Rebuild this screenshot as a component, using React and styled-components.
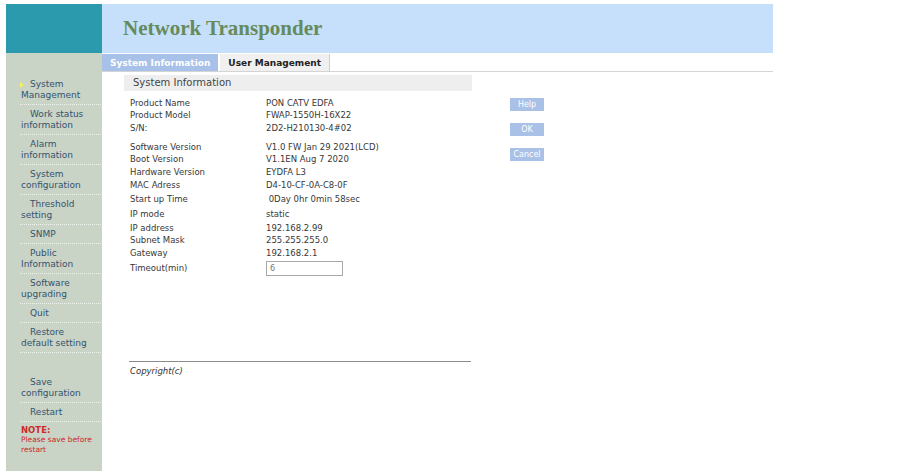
import React from 'react';
import styled, { createGlobalStyle } from 'styled-components';

const GlobalStyle = createGlobalStyle`
    body {
        margin: 0;
        background: #ffffff;
        font-family: "DejaVu Sans", Verdana, sans-serif;
    }
`;

const Page = styled.div`
    display: grid;
    grid-template-columns: 96px 671px;
    grid-template-rows: 49px 418px;
    padding: 4px 0 0 6px;
`;

const Logo = styled.div`
    background: #2b9aad;
`;

const Banner = styled.div`
    background: #c6dffa;
    display: flex;
    align-items: center;
    padding-left: 21px;
`;

const Title = styled.h1`
    margin: 0;
    font-family: "Liberation Serif", "Times New Roman", serif;
    font-size: 21px;
    font-weight: bold;
    color: #658b5d;
`;

const Sidebar = styled.div`
    background: #c9d3c6;
    padding: 22px 0 0 14px;
`;

const MenuItem = styled.div`
    position: relative;
    width: 74px;
    padding: 4px 6px 3px 1px;
    font-size: 9px;
    line-height: 11px;
    text-indent: 9px;
    color: #34536f;
    border-bottom: 1px dotted #eef2ec;

    ${p => p.$active && `
        &::before {
            content: '';
            position: absolute;
            left: 0;
            top: 7px;
            border-left: 4px solid #f2f25a;
            border-top: 3px solid transparent;
            border-bottom: 3px solid transparent;
        }
    `}
`;

const MenuGap = styled.div`
    height: 20px;
`;

const Note = styled.div`
    width: 82px;
    margin-top: 3px;
    padding-left: 1px;
    color: #cc2a2a;
    font-size: 7.5px;
    line-height: 9.5px;
`;

const NoteHead = styled.div`
    font-weight: bold;
    font-size: 8.5px;
    line-height: 10px;
`;

const Main = styled.div`
    display: flex;
    flex-direction: column;
`;

const Tabs = styled.div`
    display: flex;
    height: 17px;
    margin-top: 1px;
    border-bottom: 1px solid #d4d4d4;
`;

const Tab = styled.div`
    display: flex;
    align-items: center;
    padding: 0 8px 0 8px;
    margin-right: 2px;
    font-size: 9px;
    font-weight: bold;
    background: ${p => (p.$active ? '#a7c1e8' : '#f0f0f0')};
    color: ${p => (p.$active ? '#ffffff' : '#222222')};
    border-right: ${p => (p.$active ? 'none' : '1px solid #cfcfcf')};
`;

const Content = styled.div`
    display: flex;
    padding: 3px 0 0 22px;
`;

const LeftCol = styled.div`
    width: 348px;
`;

const SectionTitle = styled.div`
    height: 16px;
    line-height: 16px;
    padding-left: 9px;
    background: #eeeeee;
    font-size: 10px;
    color: #444444;
`;

const InfoList = styled.div`
    padding: 5px 0 0 6px;
`;

const Row = styled.div`
    display: grid;
    grid-template-columns: 136px 1fr;
    align-items: center;
    height: ${p => p.$h}px;
    margin-top: ${p => p.$gap || 0}px;
    font-size: 8.5px;
    color: #383838;
`;

const TimeoutInput = styled.input`
    width: 77px;
    height: 15px;
    box-sizing: border-box;
    border: 1px solid #a8a8a8;
    padding: 0 3px;
    font-family: "DejaVu Sans", Verdana, sans-serif;
    font-size: 8px;
    color: #777777;
`;

const Rule = styled.div`
    margin: 84px 1px 0 5px;
    border-top: 1px solid #8c8c8c;
`;

const Copyright = styled.div`
    padding: 4px 0 0 6px;
    font-size: 8.5px;
    font-style: italic;
    color: #333333;
`;

const ButtonCol = styled.div`
    display: flex;
    flex-direction: column;
    gap: 12px;
    margin-left: 38px;
    padding-top: 23px;
`;

const SmallButton = styled.button`
    width: 34px;
    height: 13px;
    padding: 0;
    border: none;
    background: #a9c1e6;
    color: #ffffff;
    font-family: "DejaVu Sans", Verdana, sans-serif;
    font-size: 8px;
`;

const info = [
    ['Product Name', 'PON CATV EDFA', 13],
    ['Product Model', 'FWAP-1550H-16X22', 12],
    ['S/N:', '2D2-H210130-4#02', 13],
    ['Software Version', 'V1.0 FW Jan 29 2021(LCD)', 13, 6],
    ['Boot Version', 'V1.1EN Aug 7 2020', 12],
    ['Hardware Version', 'EYDFA L3', 13],
    ['MAC Adress', 'D4-10-CF-0A-C8-0F', 13],
    ['Start up Time', '\u00a00Day 0hr 0min 58sec', 16],
    ['IP mode', 'static', 14],
    ['IP address', '192.168.2.99', 13],
    ['Subnet Mask', '255.255.255.0', 12],
    ['Gateway', '192.168.2.1', 13],
];

const menu = [
    ['System Management', true],
    ['Work status information'],
    ['Alarm information'],
    ['System configuration'],
    ['Threshold setting'],
    ['SNMP'],
    ['Public Information'],
    ['Software upgrading'],
    ['Quit'],
    ['Restore default setting'],
];

function App() {
    return (
        <>
            <GlobalStyle />
            <Page>
                <Logo />
                <Banner>
                    <Title>Network Transponder</Title>
                </Banner>
                <Sidebar>
                    {menu.map(([label, active]) => (
                        <MenuItem key={label} $active={active}>{label}</MenuItem>
                    ))}
                    <MenuGap />
                    <MenuItem>Save configuration</MenuItem>
                    <MenuItem>Restart</MenuItem>
                    <Note>
                        <NoteHead>NOTE:</NoteHead>
                        Please save before restart
                    </Note>
                </Sidebar>
                <Main>
                    <Tabs>
                        <Tab $active>System Information</Tab>
                        <Tab>User Management</Tab>
                    </Tabs>
                    <Content>
                        <LeftCol>
                            <SectionTitle>System Information</SectionTitle>
                            <InfoList>
                                {info.map(([label, value, h, gap]) => (
                                    <Row key={label} $h={h} $gap={gap}>
                                        <span>{label}</span>
                                        <span>{value}</span>
                                    </Row>
                                ))}
                                <Row $h={18}>
                                    <span>Timeout(min)</span>
                                    <TimeoutInput defaultValue="6" />
                                </Row>
                            </InfoList>
                            <Rule />
                            <Copyright>Copyright(c)</Copyright>
                        </LeftCol>
                        <ButtonCol>
                            <SmallButton>Help</SmallButton>
                            <SmallButton>OK</SmallButton>
                            <SmallButton>Cancel</SmallButton>
                        </ButtonCol>
                    </Content>
                </Main>
            </Page>
        </>
    );
}

export default App;
